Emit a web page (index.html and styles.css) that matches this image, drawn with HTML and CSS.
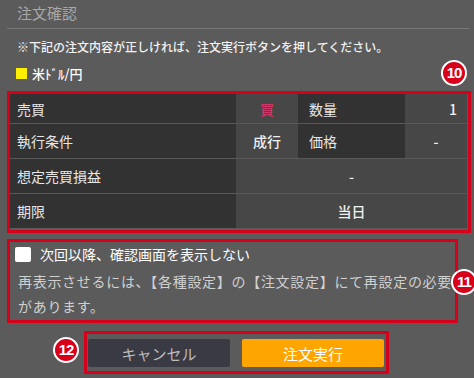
FILE: index.html
```html
<!DOCTYPE html>
<html lang="ja">
<head>
    <meta charset="UTF-8">
    <meta name="viewport" content="width=device-width, initial-scale=1.0">
    <title>注文確認</title>
    <link rel="stylesheet" href="styles.css">
</head>
<body>
    <div class="dialog">
        <div class="title">注文確認</div>
        <p class="note">※下記の注文内容が正しければ、注文実行ボタンを押してください。</p>
        <div class="pair">
            <span class="swatch"></span>
            <span class="pair-name">米ﾄﾞﾙ/円</span>
            <span class="badge badge-10">10</span>
        </div>

        <div class="mark mark-table">
            <div class="order">
                <div class="cell label">売買</div>
                <div class="cell value buy">買</div>
                <div class="cell label label2">数量</div>
                <div class="cell value right">1</div>

                <div class="cell label">執行条件</div>
                <div class="cell value">成行</div>
                <div class="cell label label2">価格</div>
                <div class="cell value">-</div>

                <div class="cell label">想定売買損益</div>
                <div class="cell value wide">-</div>

                <div class="cell label">期限</div>
                <div class="cell value wide">当日</div>
            </div>
        </div>

        <div class="mark mark-option">
            <label class="check">
                <span class="box"></span>
                <span>次回以降、確認画面を表示しない</span>
            </label>
            <p class="hint">再表示させるには、【各種設定】の【注文設定】にて再設定の必要があります。</p>
            <span class="badge badge-11">11</span>
        </div>

        <div class="mark mark-buttons">
            <button class="btn cancel">キャンセル</button>
            <button class="btn submit">注文実行</button>
            <span class="badge badge-12">12</span>
        </div>
    </div>
</body>
</html>
```

FILE: styles.css
```css
body {
    margin: 0;
    background: #5b5b5b;
    font-family: "Noto Sans CJK JP", "Noto Sans", sans-serif;
    color: #ececec;
}
.dialog {
    padding: 0 4px 0 7px;
}
.title {
    height: 28px;
    line-height: 26px;
    padding-left: 10px;
    font-size: 15px;
    color: #a8a8a8;
    border-bottom: 1px solid #777;
}
.note {
    margin: 8px 0 0;
    padding-left: 10px;
    font-size: 12px;
    line-height: 20px;
    font-weight: 500;
    color: #f2f2f2;
}
.pair {
    position: relative;
    display: flex;
    align-items: center;
    margin-top: 6px;
    height: 20px;
    padding-left: 9px;
    font-size: 13px;
    font-weight: 500;
    color: #fff;
}
.swatch {
    width: 11px;
    height: 11px;
    background: #ffee00;
    margin-right: 5px;
}
.badge {
    position: absolute;
    width: 22px;
    height: 22px;
    border: 2px solid #fff;
    border-radius: 50%;
    background: #d7001b;
    color: #fff;
    font-family: "Liberation Sans", Arial, sans-serif;
    font-size: 15px;
    font-weight: bold;
    letter-spacing: -1px;
    line-height: 22px;
    text-align: center;
}
.badge-10 {
    right: 3px;
    top: -3px;
}
.mark {
    position: relative;
    border: 3px solid #d7001b;
}
.mark-table {
    margin-top: 8px;
    width: 457px;
    padding: 0 1px 2px 0;
}
.order {
    display: grid;
    grid-template-columns: 226px 62px 107px 1fr;
    grid-template-rows: 29px 34px 34px 34px;
    row-gap: 1px;
    background: #585858;
}
.cell {
    display: flex;
    align-items: center;
    justify-content: center;
    font-size: 14px;
}
.label {
    justify-content: flex-start;
    padding-left: 7px;
    background: #323232;
    color: #e6e6e6;
}
.label2 {
    padding-left: 11px;
}
.value {
    background: #474747;
    font-weight: 500;
    color: #f0f0f0;
}
.value.right {
    justify-content: flex-end;
    padding-right: 10px;
}
.buy {
    color: #e0356a;
    font-weight: normal;
}
.wide {
    grid-column: 2 / 5;
}
.mark-option {
    margin-top: 6px;
    width: 437px;
    padding: 4px 3px 1px 5px;
}
.check {
    display: flex;
    align-items: center;
    height: 16px;
    font-size: 14px;
    color: #fff;
}
.box {
    width: 16px;
    height: 15px;
    background: #fff;
    border-radius: 2px;
    margin-right: 9px;
}
.hint {
    margin: 7px 0 0;
    padding-left: 3px;
    font-size: 14px;
    letter-spacing: 0.7px;
    line-height: 25px;
    color: #d0d0d0;
}
.badge-11 {
    right: -22px;
    top: 27px;
}
.mark-buttons {
    display: flex;
    gap: 12px;
    width: 296px;
    margin: 8px auto 0;
    padding: 5px 2px 4px 1px;
    position: relative;
    left: -2px;
}
.btn {
    width: 142px;
    height: 28px;
    border: none;
    border-radius: 2px;
    font-family: inherit;
    font-size: 15px;
    cursor: pointer;
}
.cancel {
    background: #3a3a45;
    color: #bcbcbc;
}
.submit {
    background: #ffa500;
    color: #fff;
}
.badge-12 {
    left: -34px;
    top: 3px;
}
```
